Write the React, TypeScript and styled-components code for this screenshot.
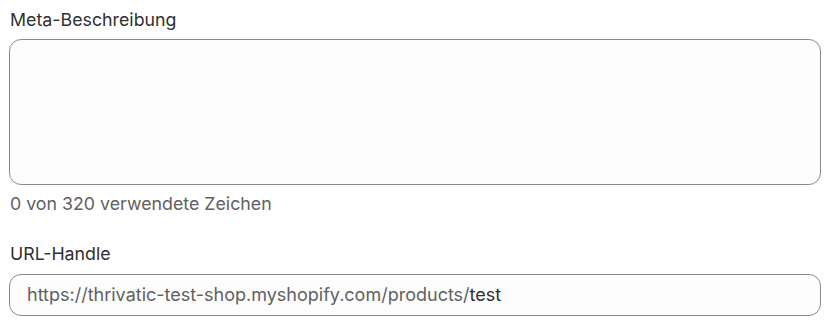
import React from "react";
import styled, { createGlobalStyle } from "styled-components";

const Global = createGlobalStyle`
  html, body { margin: 0; padding: 0; background: #ffffff; }
  body { font-family: Inter, "Noto Sans", sans-serif; }
  * { box-sizing: border-box; }
`;

const Page = styled.div`
  width: 832px;
  padding: 10px 11px 0 9px;
  display: flex;
  flex-direction: column;
`;

const Field = styled.div<{ $mb?: number }>`
  display: flex;
  flex-direction: column;
  margin-bottom: ${(p) => p.$mb ?? 0}px;
`;

const Label = styled.label`
  font-size: 17.8px;
  line-height: 20px;
  color: #303030;
  margin-bottom: 9px;
  padding-left: 1px;
`;

const TextArea = styled.div`
  height: 146px;
  border: 1px solid #8a8a8a;
  border-radius: 12px;
  background: #fdfdfd;
`;

const Help = styled.div`
  font-size: 17.8px;
  line-height: 20px;
  color: #616161;
  margin-top: 9px;
  padding-left: 1px;
`;

const Input = styled.div`
  height: 42px;
  margin-top: 1px;
  border: 1px solid #8a8a8a;
  border-radius: 12px;
  background: #fdfdfd;
  display: flex;
  align-items: center;
  padding: 0 16px 1px 17px;
  font-size: 18px;
  color: #303030;
`;

const Prefix = styled.span`
  color: #616161;
`;

export default function App() {
  return (
    <>
      <Global />
      <Page>
        <Field $mb={30}>
          <Label>Meta-Beschreibung</Label>
          <TextArea />
          <Help>0 von 320 verwendete Zeichen</Help>
        </Field>
        <Field>
          <Label>URL-Handle</Label>
          <Input>
            <Prefix>https://thrivatic-test-shop.myshopify.com/products/</Prefix>
            test
          </Input>
        </Field>
      </Page>
    </>
  );
}
